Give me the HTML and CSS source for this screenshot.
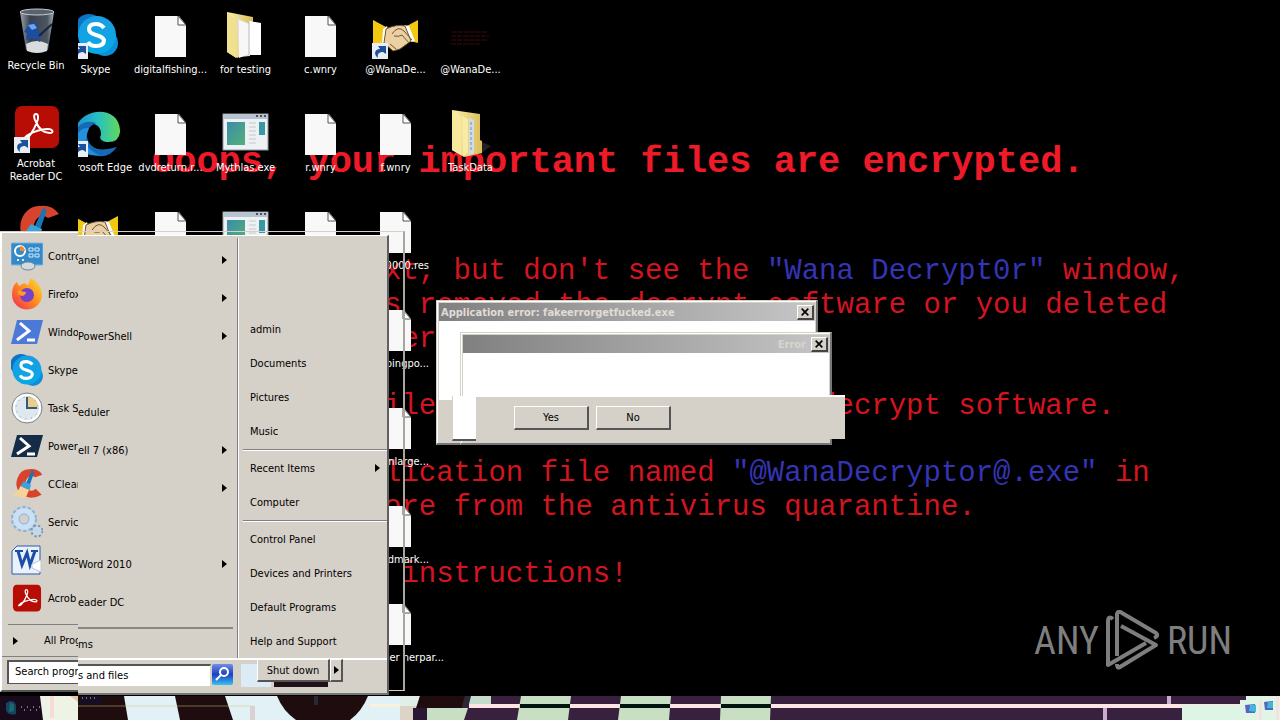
FILE: index.html
```
<!DOCTYPE html>
<html lang="en">
<head>
    <meta charset="UTF-8">
    <meta name="viewport" content="width=device-width, initial-scale=1.0">
    <title>Desktop</title>
    <link rel="stylesheet" href="styles.css">
</head>
<body>
    <!-- icon shapes -->
    <svg class="defs" width="0" height="0">
        <defs>
            <linearGradient id="gSkype" x1="0" y1="0" x2="0" y2="1"><stop offset="0" stop-color="#1b9de0"/><stop offset="1" stop-color="#06a9e8"/></linearGradient>
            <linearGradient id="gEdge" x1="0" y1="0" x2="1" y2="0"><stop offset="0" stop-color="#1b8fd0"/><stop offset=".5" stop-color="#27bfc4"/><stop offset="1" stop-color="#62d95a"/></linearGradient>
            <linearGradient id="gFolder" x1="0" y1="0" x2="1" y2="0"><stop offset="0" stop-color="#fbf0ac"/><stop offset="1" stop-color="#d9bd5c"/></linearGradient>
            <linearGradient id="gApp" x1="0" y1="0" x2="1" y2="1"><stop offset="0" stop-color="#3a8cab"/><stop offset="1" stop-color="#55b076"/></linearGradient>
            <linearGradient id="gFox" x1="1" y1="0" x2="0" y2="1"><stop offset="0" stop-color="#ffe13a"/><stop offset=".5" stop-color="#ff8a1c"/><stop offset="1" stop-color="#f0225c"/></linearGradient>
            <linearGradient id="gBin" x1="0" y1="0" x2="1" y2="0"><stop offset="0" stop-color="#9aa3ab"/><stop offset=".3" stop-color="#39424c"/><stop offset=".8" stop-color="#4b5560"/><stop offset="1" stop-color="#aab2ba"/></linearGradient>
            <linearGradient id="gSearch" x1="0" y1="0" x2="0" y2="1"><stop offset="0" stop-color="#6f8fe6"/><stop offset=".5" stop-color="#1d3fc4"/><stop offset="1" stop-color="#35c4f2"/></linearGradient>
        </defs>
        <symbol id="doc" viewBox="0 0 48 48">
            <path d="M8 4h24l7 9v32H8z" fill="#f8f8f8"/>
            <path d="M31 4v9h8z" fill="#fff" stroke="#555" stroke-width="1"/>
        </symbol>
        <symbol id="shortcut" viewBox="0 0 16 16">
            <rect width="16" height="16" fill="#e9eef5"/>
            <path d="M6 15C1 11 3 6 8 6L6 3l8 0v8l-3-2c-4 0-6 2-5 6z" fill="#1c4f9c"/>
        </symbol>
        <symbol id="bin" viewBox="0 0 48 48">
            <path d="M8 4h34l-6 38q-11 6-22 0z" fill="url(#gBin)"/>
            <ellipse cx="25" cy="4" rx="17" ry="3" fill="#59636d" stroke="#c5cbd0"/>
            <path d="M14 36q11-6 22 0l-1 7q-10 4-20 0z" fill="#d9dcdf"/>
            <path d="M17 16c7-4 10 1 8 5l6 5-4 1 1 7-7-4-7 2 1-7-3-1z" fill="#1c4d9f"/>
            <path d="M16 17l6-1 3 4-5 2z" fill="#6ea8e8"/>
            <path d="M27 28l13-12" stroke="#16263f" stroke-width="2"/>
        </symbol>
        <symbol id="acrobat" viewBox="0 0 48 48">
            <rect x="3" y="0" width="44" height="42" rx="7" fill="#b80d05"/>
            <path d="M12 33c4 1 10-9 13-17 2-5 1-8-1-8s-3 3 0 8c3 7 8 11 14 11 4 0 3-4-2-4-8 0-22 5-24 10z" fill="none" stroke="#fff" stroke-width="2"/>
        </symbol>
        <symbol id="ccleaner" viewBox="0 0 48 48">
            <path d="M47 10Q40 0 27 2A19 21 0 0 0 14 38q14 12 32 2l-9-9a9 11 0 1 1-1-17z" fill="#d8432c"/>
            <path d="M31 4l4 2-7 20-6-2z" fill="#1b74b3"/>
            <path d="M19 20l11 5-2 8-14-6z" fill="#3ba3dc"/>
            <path d="M14 27l13 6-5 12L2 41q9-5 12-14z" fill="#f3d49a"/>
        </symbol>
        <symbol id="skype" viewBox="0 0 48 48">
            <circle cx="17" cy="16" r="14" fill="#0b74c4"/>
            <circle cx="33" cy="31" r="13" fill="#0b8fd8"/>
            <circle cx="25" cy="23" r="19" fill="url(#gSkype)"/>
            <path d="M32 16q-3-4-8-4-7 0-7 5 0 4 7 6t8 5q0 6-8 6-6 0-8-4" fill="none" stroke="#fff" stroke-width="4"/>
        </symbol>
        <symbol id="edge" viewBox="0 0 48 48">
            <path d="M3 22C6-4 49-6 48 22q-1 11-14 10-8-2-5-7C30 10 9 10 3 22z" fill="url(#gEdge)"/>
            <path d="M2 24q7-16 22-11-10 4-9 14 4 18 30 10Q37 48 26 46 0 44 2 24z" fill="#1668b8"/>
            <path d="M17 18q-9 20 11 27Q6 47 3 28q5-11 14-10z" fill="#2390dc"/>
        </symbol>
        <symbol id="folderopen" viewBox="0 0 48 48">
            <path d="M5 0l26 5v33l-16 8L5 40z" fill="url(#gFolder)"/>
            <path d="M15 6l13 6v32l-11 1z" fill="#dfe0e2"/>
            <path d="M17 8l12 5v28l-12 5z" fill="#f7f7f7"/>
            <path d="M27 9l12 2v32l-12 0z" fill="#fff"/>
            <path d="M27 10v33" stroke="#b5b8bb"/>
            <path d="M5 0l9 8v38L5 40z" fill="#f1e08d"/>
        </symbol>
        <symbol id="folder" viewBox="0 0 48 48">
            <path d="M30 30l14 6-12 9z" fill="#222"/>
            <path d="M5 0l28 4v26l2 1v12l-18 4L5 40z" fill="url(#gFolder)"/>
            <path d="M15 6l6 3v34l-5 3z" fill="#f8eca5"/>
            <path d="M22 8l5 2v33l-5 2z" fill="#cfdbe6"/>
            <path d="M24 12v30" stroke="#6b8fc4" stroke-dasharray="3 2"/>
            <path d="M5 0l9 7v38l-9-5z" fill="#f7e99d"/>
        </symbol>
        <symbol id="app" viewBox="0 0 48 48">
            <rect x="1" y="4" width="45" height="36" fill="#eef1f3" stroke="#8e979f"/>
            <path d="M2 7h43" stroke="#b5c4d2" stroke-width="4"/>
            <path d="M34 6h10" stroke="#46525e" stroke-width="2" stroke-dasharray="2 2"/>
            <rect x="5" y="12" width="18" height="23" fill="url(#gApp)"/>
            <path d="M27 13h7M27 17h7M27 21h7M27 25h7M27 29h7M27 33h7" stroke="#c4c9cd"/>
            <rect x="37" y="12" width="6" height="13" fill="#3a97a4"/>
        </symbol>
        <symbol id="hands" viewBox="0 0 48 48">
            <path d="M1 8l13 7-4 18H1z" fill="#f2c811"/>
            <path d="M46 8l-13 7 5 14 8 2z" fill="#f2c811"/>
            <path d="M11 17l4-3 5 17-6 5-4-4zM32 13l5 1 6 15-5 1z" fill="#fff"/>
            <path d="M14 17q10-5 19-3l6 15-11 8-7 2-9-8z" fill="#ecd0a2" stroke="#6e5538"/>
            <path d="M20 22q6-9 12-3l8 9M22 24q5 1 8-1l7 8M18 32l6 5" fill="none" stroke="#6e5538" stroke-width="1"/>
        </symbol>
        <symbol id="redtext" viewBox="0 0 48 48">
            <path d="M5 20h36M4 24h38M4 28h37M4 32h30" stroke="#420a0c" stroke-dasharray="5 1"/>
        </symbol>
        <symbol id="cpanel" viewBox="0 0 32 32">
            <rect x="0" y="3" width="32" height="22" rx="1" fill="#3489c8" stroke="#74b6e2"/>
            <circle cx="9" cy="11" r="5" fill="none" stroke="#fff" stroke-width="2"/>
            <path d="M9 11V6a5 5 0 0 1 5 5z" fill="#f28a2d"/>
            <path d="M18 8h4v3h-4zM24 8h4v3h-4zM18 14h4v3h-4zM24 14h4v3h-4z" fill="none" stroke="#d4ecfb"/>
            <path d="M6 20h2M11 20h2" stroke="#d4ecfb" stroke-width="2"/>
            <ellipse cx="17" cy="26" rx="7" ry="4" fill="#d3dbe0" stroke="#6f8796"/>
        </symbol>
        <symbol id="firefox" viewBox="0 0 32 32">
            <path d="M3 7l3-3 2 4 5-3 4 2 3-7q10 6 11 16a15 15 0 0 1-30 1Q1 11 3 7z" fill="url(#gFox)"/>
            <circle cx="16" cy="17" r="7" fill="#7242c9"/>
            <path d="M7 12q5 2 8 2 0 3-4 4-5-1-4-6z" fill="#ff9b20"/>
        </symbol>
        <symbol id="psblue" viewBox="0 0 32 32">
            <path d="M6 4h26l-6 24H0z" fill="#4c78d8"/>
            <path d="M9 7l9 8-12 9M16 24h8" fill="none" stroke="#fff" stroke-width="3"/>
        </symbol>
        <symbol id="psdark" viewBox="0 0 32 32">
            <path d="M6 5h26l-6 22H0z" fill="#152c48"/>
            <path d="M9 8l9 8-12 8M16 24h8" fill="none" stroke="#fff" stroke-width="3"/>
        </symbol>
        <symbol id="clock" viewBox="0 0 32 32">
            <circle cx="16" cy="16" r="15" fill="#dfe8ee" stroke="#7b848b" stroke-width="1"/>
            <circle cx="16" cy="16" r="13" fill="none" stroke="#fff" stroke-width="2"/>
            <path d="M16 16V4a12 12 0 0 1 11 12z" fill="#e8cf8c"/>
            <path d="M16 5v11h10" fill="none" stroke="#3c5878" stroke-width="2"/>
            <circle cx="16" cy="16" r="11" fill="none" stroke="#7d96ad" stroke-dasharray="1 5"/>
        </symbol>
        <symbol id="gears" viewBox="0 0 32 32">
            <circle cx="13" cy="13" r="11" fill="none" stroke="#86b2dc" stroke-width="4" stroke-dasharray="3 2"/>
            <circle cx="13" cy="13" r="8" fill="none" stroke="#c9e0f5" stroke-width="6"/>
            <circle cx="13" cy="13" r="5" fill="none" stroke="#86b2dc"/>
            <circle cx="26" cy="25" r="5" fill="none" stroke="#6c97c2" stroke-width="3" stroke-dasharray="2 2"/>
            <circle cx="26" cy="25" r="3" fill="none" stroke="#c3daee" stroke-width="3"/>
        </symbol>
        <symbol id="word" viewBox="0 0 32 32">
            <path d="M6 2h23v28H1V7z" fill="#e9f1fc" stroke="#2a5ba8" stroke-width="1"/>
            <path d="M4 7h8M20 7h7" stroke="#1c4ea5" stroke-width="2"/>
            <path d="M7 7l4 14 5-12 3 12 5-14" fill="none" stroke="#1c4ea5" stroke-width="3"/>
            <path d="M21 20l9-4v12l-9-4z" fill="#fff" stroke="#b8c8dc"/>
        </symbol>
    </svg>

    <main class="desktop">
        <div class="wallpaper">
            <h1>Ooops, your important files are encrypted.</h1>
            <p>xt, but don't see the <b>"Wana Decrypt0r"</b> window,
s removed the decrypt software or you deleted
ter.</p>
            <p>iles you have to run the decrypt software.</p>
            <p>lication file named <b>"@WanaDecryptor@.exe"</b> in
ore from the antivirus quarantine.</p>
            <p> instructions!</p>
        </div>

        <div class="icons icons-main">
            <div class="icon-col">
                <a href="#" class="icon"><svg><use href="#skype"/></svg><svg class="arrow"><use href="#shortcut"/></svg><span>Skype</span></a>
                <a href="#" class="icon"><svg><use href="#edge"/></svg><svg class="arrow"><use href="#shortcut"/></svg><span>Microsoft Edge</span></a>
                <a href="#" class="icon"><svg><use href="#hands"/></svg></a>
            </div>
            <div class="icon-col">
                <a href="#" class="icon"><svg><use href="#doc"/></svg><span>digitalfishing...</span></a>
                <a href="#" class="icon"><svg><use href="#doc"/></svg><span>dvdreturn.r...</span></a>
                <a href="#" class="icon"><svg><use href="#doc"/></svg></a>
            </div>
            <div class="icon-col">
                <a href="#" class="icon"><svg><use href="#folderopen"/></svg><span>for testing</span></a>
                <a href="#" class="icon"><svg><use href="#app"/></svg><span>Mythlas.exe</span></a>
                <a href="#" class="icon"><svg><use href="#app"/></svg></a>
            </div>
            <div class="icon-col">
                <a href="#" class="icon"><svg><use href="#doc"/></svg><span>c.wnry</span></a>
                <a href="#" class="icon"><svg><use href="#doc"/></svg><span>r.wnry</span></a>
                <a href="#" class="icon"><svg><use href="#doc"/></svg></a>
            </div>
            <div class="icon-col">
                <a href="#" class="icon"><svg><use href="#hands"/></svg><svg class="arrow"><use href="#shortcut"/></svg><span>@WanaDe...</span></a>
                <a href="#" class="icon"><svg><use href="#doc"/></svg><span>f.wnry</span></a>
                <a href="#" class="icon cut"><svg><use href="#doc"/></svg><span>0000.res</span></a>
                <a href="#" class="icon cut"><svg><use href="#doc"/></svg><span>pingpo...</span></a>
                <a href="#" class="icon cut"><svg><use href="#doc"/></svg><span>nlarge...</span></a>
                <a href="#" class="icon cut"><svg><use href="#doc"/></svg><span>dmark...</span></a>
                <a href="#" class="icon cut wide"><svg><use href="#doc"/></svg><span>ner nerpar...</span></a>
            </div>
            <div class="icon-col">
                <a href="#" class="icon"><svg><use href="#redtext"/></svg><span>@WanaDe...</span></a>
                <a href="#" class="icon"><svg><use href="#folder"/></svg><span>TaskData</span></a>
            </div>
        </div>
        <div class="icons icons-slice">
            <div class="icon-col">
                <a href="#" class="icon"><svg><use href="#bin"/></svg><span>Recycle Bin</span></a>
                <a href="#" class="icon"><svg><use href="#acrobat"/></svg><svg class="arrow"><use href="#shortcut"/></svg><span>Acrobat<br>Reader DC</span></a>
                <a href="#" class="icon"><svg><use href="#ccleaner"/></svg></a>
            </div>
        </div>

        <div class="ghost-frame"></div>

        <nav class="start-menu">
            <div class="menu-slice">
                <a href="#"><svg><use href="#cpanel"/></svg>Contro</a>
                <a href="#"><svg><use href="#firefox"/></svg>Firefox</a>
                <a href="#"><svg><use href="#psblue"/></svg>Windo</a>
                <a href="#"><svg viewBox="4 2 42 42"><use href="#skype" width="48" height="48"/></svg>Skype</a>
                <a href="#"><svg><use href="#clock"/></svg>Task S</a>
                <a href="#"><svg><use href="#psdark"/></svg>Power</a>
                <a href="#"><svg><use href="#ccleaner"/></svg>CClean</a>
                <a href="#"><svg><use href="#gears"/></svg>Servic</a>
                <a href="#"><svg><use href="#word"/></svg>Micros</a>
                <a href="#"><svg viewBox="0 -3 50 48"><use href="#acrobat" width="48" height="48"/></svg>Acrob</a>
                <a href="#" class="all"><i class="tri"></i>All Prog</a>
                <div class="search"><input type="text" value="Search progr" aria-label="Search"></div>
            </div>
            <div class="menu-body">
                <div class="panes">
                    <div class="programs">
                        <a href="#">anel<i class="tri"></i></a>
                        <a href="#"><i class="tri"></i></a>
                        <a href="#">PowerShell<i class="tri"></i></a>
                        <a href="#"></a>
                        <a href="#">eduler</a>
                        <a href="#">ell 7 (x86)<i class="tri"></i></a>
                        <a href="#"><i class="tri"></i></a>
                        <a href="#"></a>
                        <a href="#">Word 2010<i class="tri"></i></a>
                        <a href="#">eader DC</a>
                        <a href="#" class="all">ms</a>
                    </div>
                    <div class="places">
                        <a href="#">admin</a>
                        <a href="#">Documents</a>
                        <a href="#">Pictures</a>
                        <a href="#">Music</a>
                        <hr>
                        <a href="#">Recent Items<i class="tri"></i></a>
                        <a href="#">Computer</a>
                        <hr>
                        <a href="#">Control Panel</a>
                        <a href="#">Devices and Printers</a>
                        <a href="#">Default Programs</a>
                        <a href="#">Help and Support</a>
                    </div>
                </div>
                <div class="menu-foot">
                    <input type="text" value="s and files" aria-label="Search programs and files">
                    <button class="go" aria-label="Search"><svg viewBox="0 0 21 21"><rect width="21" height="21" rx="2" fill="url(#gSearch)"/><circle cx="12" cy="8" r="4" fill="none" stroke="#fff" stroke-width="2"/><path d="M9 11l-5 5" stroke="#fff" stroke-width="2"/></svg></button>
                    <div class="power">
                        <button class="shut">Shut down</button><button class="more" aria-label="More"><i class="tri"></i></button>
                    </div>
                </div>
            </div>
        </nav>

        <section class="dialog dialog-back">
            <header><span>Application error: fakeerrorgetfucked.exe</span><button class="close" aria-label="Close"><svg viewBox="0 0 12 12"><path d="M2 2l8 8M10 2l-8 8" stroke="#000" stroke-width="2"/></svg></button></header>
            <div class="content"></div>
        </section>
        <section class="dialog dialog-front">
            <header><span>Error</span><button class="close" aria-label="Close"><svg viewBox="0 0 12 12"><path d="M2 2l8 8M10 2l-8 8" stroke="#000" stroke-width="2"/></svg></button></header>
            <div class="content"></div>
        </section>
        <div class="shard"></div>
        <div class="dialog-buttons">
            <button>Yes</button>
            <button>No</button>
        </div>

        <div class="brand">
            <span>ANY</span>
            <svg viewBox="0 0 56 62">
                <g fill="none" stroke="#7e7e7e" stroke-width="4" stroke-linejoin="round">
                    <path d="M8 9Q3 5 3 12v43l38-22"/>
                    <path d="M12 46V4q1-4 5-1l34 20q3 3-2 5"/>
                    <path d="M16 16l35 19-36 22q-3 2-3-3"/>
                </g>
            </svg>
            <span>RUN</span>
        </div>
    </main>

    <footer class="taskbar">
        <svg viewBox="0 0 1280 24" preserveAspectRatio="none">
            <rect width="1280" height="24" fill="#37213f"/>
            <rect width="78" height="24" fill="#eef3e6"/>
            <path d="M0 0h40l3 24H0z" fill="#180a1a"/>
            <path d="M6 7q7-5 10 2v9q-8 2-10-4z" fill="#164266"/>
            <path d="M10 6l4 3v6l-5 1z" fill="#1b6d62"/>
            <path d="M21 11h26M24 14h24" stroke="#e9d6ee" stroke-dasharray="1 5"/>
            <rect x="50" y="0" width="4" height="22" fill="#f6dcd6"/>
            <path d="M70 0h8v6z" fill="#e6c9a2"/>
            <rect x="78" y="0" width="322" height="24" fill="#e2f1f6"/>
            <path d="M78 0h46l4 24H78z" fill="#1e0c0f"/>
            <path d="M80 0h22v8H80z" fill="#160e22"/>
            <path d="M82 2h14" stroke="#d9c8de" stroke-dasharray="1 3"/>
            <path d="M175 0h50l8 24h-53z" fill="#1e0c0f"/>
            <path d="M277 0h91q-6 15-18 24h-54q-13-9-19-24z" fill="#1e0c0f"/>
            <path d="M314 0h4v9h-4z" fill="#252b32"/>
            <path d="M78 10h175" stroke="#dcc878" stroke-opacity=".5"/>
            <path d="M250 10h5v14h-5z" fill="#dccfd2"/>
            <rect x="370" y="8" width="50" height="3" fill="#f8f2dc"/>
            <path d="M400 0h20l-6 24h-14z" fill="#e2eee8"/>
            <path d="M400 10h17l-4 14h-13z" fill="#dcd5c7"/>
            <path d="M420 0h45l-3 12h-46z" fill="#1e0c0f"/>
            <path d="M413 12h14v12h-14z" fill="#291733"/>
            <path d="M427 12h41l-4 12h-37z" fill="#c9dfc3"/>
            <path d="M465 0h6l-3 10h-6z" fill="#2d2734"/>
            <path d="M471 0h20v8h-22z" fill="#c3dccb"/>
            <rect x="469" y="8" width="777" height="4" fill="#fde5e5"/>
            <path d="M521 0h50l-3 24h-51z" fill="#c9dfc3"/>
            <path d="M621 0h50l-2 24h-51z" fill="#c9dfc3"/>
            <path d="M721 0h50l-1 24h-50z" fill="#c9dfc3"/>
            <path d="M520 8h50v4h-50zM620 8h50v4h-50zM721 8h50v4h-50z" fill="#03140f"/>
            <path d="M1167 0h4v8h-4zM1103 12h4v12h-4z" fill="#c9acd0"/>
            <path d="M1182 9h58v15h-58z" fill="#def4e5"/>
            <path d="M1246 0h34v24h-40V4h6z" fill="#dff5e6"/>
            <path d="M1245 9l10-1v9h-9z" fill="#5f62c4"/>
            <path d="M1250 9h6v7l-7-1z" fill="#3fb9d8"/>
            <path d="M1264 6l9-1v9h-8z" fill="#5268bd"/>
            <path d="M1268 6h5v6l-6 0z" fill="#43b5d8"/>
            <path d="M1259 4h3v20h-3zM1276 0h3v24h-3z" fill="#f7e1dd"/>
        </svg>
    </footer>
</body>
</html>
```
FILE: styles.css
```
* {
    box-sizing: border-box;
}
body {
    margin: 0;
    min-height: 100vh;
    display: flex;
    flex-direction: column;
    background: #000;
    color: #000;
    font-family: "DejaVu Sans Condensed", "DejaVu Sans", sans-serif;
    font-size: 11px;
    line-height: 13px;
    overflow: hidden;
}
a {
    color: inherit;
    text-decoration: none;
}
button, input {
    font: inherit;
    color: inherit;
}
.defs {
    position: absolute;
}
.desktop {
    position: relative;
    flex: 1;
    overflow: hidden;
}
.taskbar {
    height: 24px;
}
.taskbar svg {
    display: block;
    width: 100%;
    height: 100%;
}

/* wallpaper */
.wallpaper {
    padding-top: 140px;
    font-family: "Liberation Mono", monospace;
    color: #d41420;
}
.wallpaper h1, .wallpaper p {
    white-space: pre;
}
.wallpaper h1 {
    margin: 0 0 71px 152px;
    font-size: 37px;
    line-height: 44px;
    color: #ee1a28;
}
.wallpaper p {
    margin: 0 0 33px 384px;
    font-size: 29px;
    line-height: 34px;
}
.wallpaper b {
    font-weight: normal;
    color: #3434b4;
}

/* desktop icons */
.icons {
    position: absolute;
    display: flex;
    overflow: hidden;
    color: #fff;
}
.icons-slice {
    left: 0;
    top: 8px;
    width: 78px;
    padding-right: 6px;
}
.icons-main {
    left: 78px;
    top: 12px;
}
.icons-main .icon-col:first-child {
    margin-left: -20px;
}
.icon-col {
    width: 75px;
}
.icon {
    position: relative;
    display: flex;
    flex-direction: column;
    align-items: center;
    gap: 3px;
    height: 98px;
    text-align: center;
    white-space: nowrap;
}
.icon svg {
    width: 48px;
    height: 48px;
    flex: none;
}
.icon .arrow {
    position: absolute;
    left: 14px;
    top: 31px;
    width: 16px;
    height: 16px;
}
.icon.cut span {
    align-self: flex-end;
    padding-right: 4px;
}
.icon.wide span {
    margin-right: -15px;
}

/* start menu */
.ghost-frame {
    position: absolute;
    left: 0;
    top: 231px;
    width: 405px;
    height: 460px;
    border: 1px solid #d6d0c8;
    border-right: 2px solid #a9a59f;
}
.start-menu {
    position: absolute;
    left: 0;
    top: 232px;
    display: flex;
    align-items: flex-start;
}
.start-menu a {
    display: flex;
    align-items: center;
    height: 38px;
    white-space: nowrap;
}
.tri {
    width: 0;
    height: 0;
    border: 4px solid transparent;
    border-left: 5px solid #000;
    border-right: 0;
}
.menu-slice {
    width: 78px;
    height: 460px;
    padding-top: 4px;
    overflow: hidden;
    background: #d5d0c8;
    border-left: 2px solid #fff;
    border-top: 1px solid #fff;
    border-bottom: 2px solid #555;
}
.menu-slice a {
    padding-left: 9px;
    gap: 5px;
}
.menu-slice a svg {
    width: 32px;
    height: 32px;
    flex: none;
}
.menu-slice a.all {
    height: 32px;
    margin: 7px 0 0 6px;
    padding-left: 5px;
    gap: 26px;
    border-top: 1px solid #808080;
}
.search {
    padding: 3px 0 0 5px;
    border-top: 1px solid #808080;
}
.search input {
    width: 90px;
    height: 24px;
    padding: 0 6px 2px;
    background: #fff;
    border: 1px solid #555;
    border-width: 2px 0 1px 2px;
}
.menu-body {
    width: 311px;
    height: 460px;
    margin-top: 3px;
    padding-top: 2px;
    background: #d5d0c8;
    border-top: 1px solid #fff;
    border-right: 2px solid #606060;
    border-bottom: 2px solid #777;
}
.panes {
    display: flex;
    height: 422px;
    border-bottom: 2px solid #fff;
}
.programs {
    width: 160px;
    padding-top: 3px;
    border-right: 1px solid #808080;
}
.programs a {
    padding-right: 10px;
}
.programs .tri, .places .tri {
    margin-left: auto;
}
.programs a.all {
    height: 32px;
    margin-top: 6px;
    margin-right: 4px;
    border-top: 2px solid #8a8781;
}
.places {
    flex: 1;
    padding: 74px 0 0 4px;
    border-left: 1px solid #fff;
}
.places a {
    height: 34px;
    padding: 0 7px;
}
.places hr {
    height: 2px;
    margin: 1px 0 0;
    border: 0;
    border-top: 1px solid #808080;
    border-bottom: 1px solid #fff;
}
.menu-foot {
    display: flex;
    align-items: flex-start;
    gap: 1px;
    padding-top: 4px;
}
.menu-foot input {
    width: 133px;
    height: 22px;
    padding: 0 0 2px;
    background: #fff;
    border: 0;
    border-top: 2px solid #555;
    border-right: 1px solid #d5d0c8;
}
.go {
    width: 21px;
    height: 21px;
    padding: 0;
    border: 0;
    background: none;
}
.go svg {
    display: block;
}
.power {
    display: flex;
    margin: -5px 0 0 7px;
    padding: 0 0 5px 16px;
    background: linear-gradient(#201018, #201018) 33px 100% / 54px 6px no-repeat, linear-gradient(#dcebf5, #dcebf5) 0 5px / 30px 100% no-repeat;
}
.power button {
    height: 23px;
    padding: 0;
    background: #d5d0c8;
    border: 1px solid #fff;
    border-right: 2px solid #555;
    border-bottom: 2px solid #555;
}
.power .shut {
    width: 73px;
}
.power .more {
    width: 13px;
    padding-left: 3px;
}
.more .tri {
    display: block;
}

/* dialogs */
.dialog {
    position: absolute;
    display: flex;
    flex-direction: column;
    background: #d5d0c8;
    border: 1px solid #d5d0c8;
    border-right: 2px solid #777;
    border-bottom: 2px solid #777;
    box-shadow: inset 1px 1px #fff;
    padding: 2px 1px 0 2px;
}
.dialog header {
    display: flex;
    align-items: center;
    justify-content: space-between;
    height: 18px;
    padding: 0 1px 0 2px;
    background: linear-gradient(90deg, #808080, #c6c6c6);
    color: #e0dcd6;
    font-weight: bold;
    white-space: nowrap;
}
.dialog .content {
    background: #fff;
}
.close {
    width: 17px;
    height: 15px;
    padding: 0 2px;
    background: #d5d0c8;
    border: 1px solid #fff;
    border-right: 2px solid #444;
    border-bottom: 2px solid #444;
}
.close svg {
    display: block;
    width: 10px;
    height: 10px;
}
.dialog-back {
    left: 436px;
    top: 300px;
    width: 382px;
    height: 145px;
}
.dialog-back .content {
    height: 79px;
}
.dialog-front {
    left: 460px;
    top: 332px;
    width: 372px;
    height: 113px;
}
.dialog-front header {
    justify-content: flex-end;
    gap: 5px;
    color: #d8d4ce;
}
.dialog-front .content {
    height: 44px;
}
.shard {
    position: absolute;
    left: 452px;
    top: 396px;
    width: 24px;
    height: 45px;
    background: #fff;
    border-left: 1px solid #d5d0c8;
    border-bottom: 2px solid #555;
}
.dialog-buttons {
    position: absolute;
    left: 476px;
    top: 395px;
    width: 369px;
    height: 44px;
    display: flex;
    gap: 7px;
    padding: 9px 38px;
    background: #d5d0c8;
    border-top: 2px solid #fff;
}
.dialog-buttons button {
    width: 75px;
    height: 24px;
    padding: 0;
    background: #d5d0c8;
    border: 1px solid #fff;
    border-right: 2px solid #555;
    border-bottom: 2px solid #555;
}

/* watermark */
.brand {
    position: absolute;
    right: 48px;
    bottom: 24px;
    display: flex;
    align-items: center;
    gap: 6px;
    color: #7e7e7e;
    font-family: "Roboto Condensed", "Liberation Sans Narrow", "Liberation Sans", sans-serif;
    font-size: 38px;
    line-height: 62px;
}
.brand svg {
    width: 56px;
    height: 62px;
}
```
